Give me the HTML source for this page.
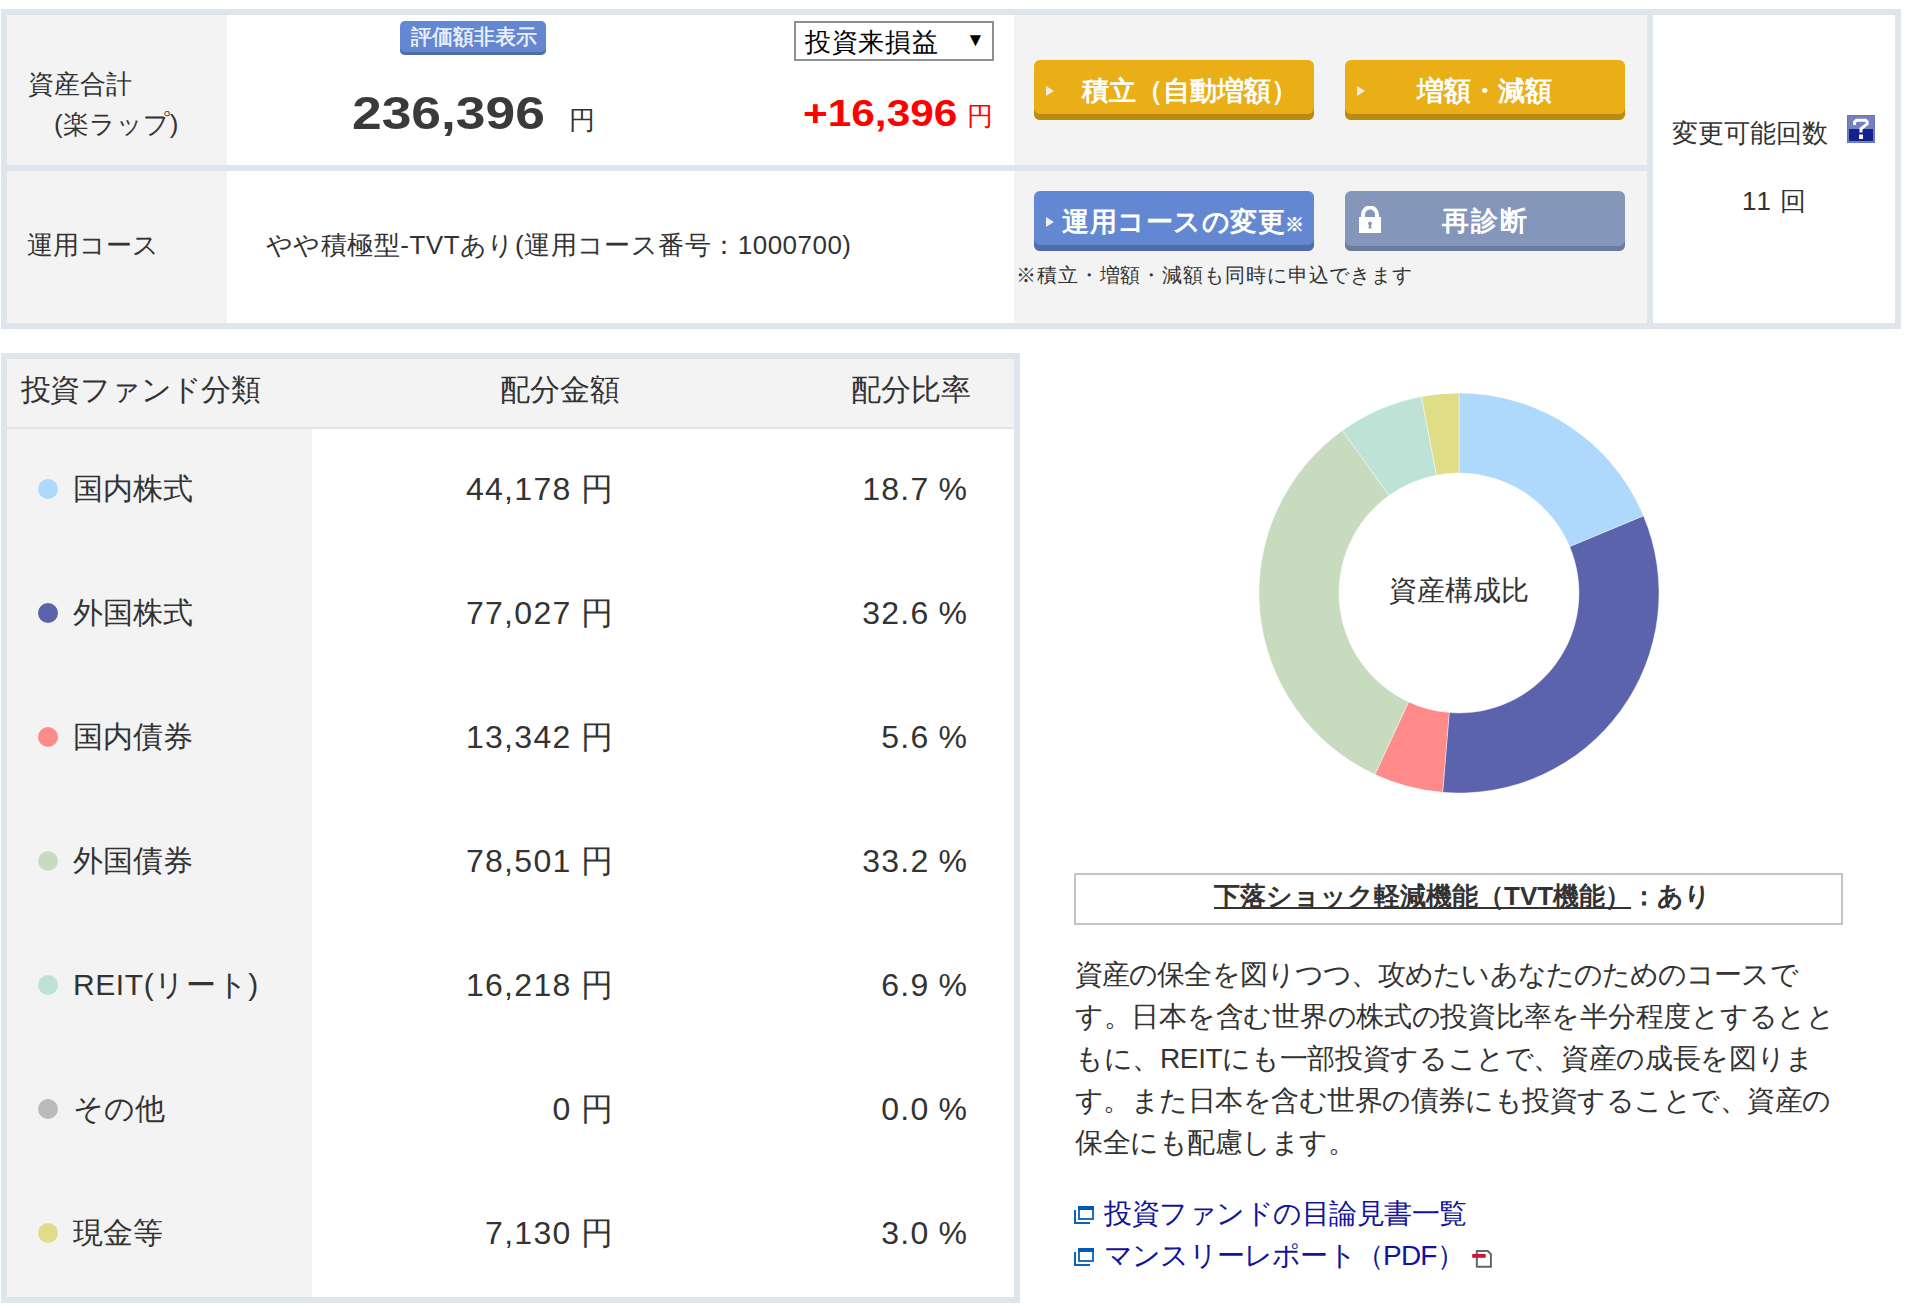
<!DOCTYPE html>
<html lang="ja">
<head>
<meta charset="utf-8">
<style>
html,body{margin:0;padding:0;}
body{width:1914px;height:1308px;overflow:hidden;background:#fff;position:relative;font-family:"Liberation Sans",sans-serif;color:#333;}
.a{position:absolute;white-space:nowrap;}
.bd{background:#dee5ec;}
.g{background:#f3f3f3;}
.w{background:#fff;}
.btn{position:absolute;width:280px;height:60px;border-radius:6px;}
.y{background:#eaae17;box-shadow:inset 0 -6px 0 #bb8a12;}
.bl{background:#6388d1;box-shadow:inset 0 -6px 0 #4f6daa;}
.gr{background:#8496ba;box-shadow:inset 0 -5px 0 #6b7c9c;}
.tri{position:absolute;width:0;height:0;border-top:5px solid transparent;border-bottom:5px solid transparent;border-left:8px solid #f1ede4;}
.bt{position:absolute;color:#fff;font-weight:bold;font-size:27px;line-height:30px;}
.row{position:absolute;left:0;width:1020px;height:124px;}
.dot{position:absolute;left:38px;top:50px;width:20px;height:20px;border-radius:50%;}
.nm{position:absolute;left:73px;top:42px;font-size:30px;line-height:36px;}
.amt{position:absolute;right:407.5px;top:42px;font-size:32px;line-height:36px;text-align:right;}
.amt b,.pct b{font-weight:normal;letter-spacing:1.3px;}
.pct{position:absolute;right:53px;top:42px;font-size:32px;line-height:36px;text-align:right;}
.p{position:absolute;left:1075px;font-size:28px;line-height:30px;}
.lk{position:absolute;left:1104px;font-size:28px;line-height:30px;color:#14149a;}
</style>
</head>
<body>
<!-- TOP PANEL -->
<div class="a bd" style="left:1px;top:9px;width:1900px;height:320px;"></div>
<div class="a g" style="left:7px;top:15px;width:220px;height:150px;"></div>
<div class="a w" style="left:227px;top:15px;width:787px;height:150px;"></div>
<div class="a g" style="left:1014px;top:15px;width:633px;height:150px;"></div>
<div class="a g" style="left:7px;top:171px;width:220px;height:152px;"></div>
<div class="a w" style="left:227px;top:171px;width:787px;height:152px;"></div>
<div class="a g" style="left:1014px;top:171px;width:633px;height:152px;"></div>
<div class="a w" style="left:1653px;top:15px;width:242px;height:308px;"></div>

<div class="a" style="left:28px;top:69px;font-size:26px;line-height:30px;">資産合計</div>
<div class="a" style="left:54px;top:109px;font-size:26px;line-height:30px;">(楽ラップ)</div>

<div class="a" style="left:400px;top:21px;width:146px;height:34px;border-radius:5px;background:#6388d1;box-shadow:inset 0 -3px 0 #4f6daa;"></div>
<div class="a" style="left:410px;top:23px;width:128px;text-align:center;color:#eef2fa;font-weight:normal;-webkit-text-stroke:0.5px #eef2fa;font-size:21px;line-height:28px;">評価額非表示</div>

<div class="a" style="left:352px;top:88px;font-size:46px;line-height:50px;font-weight:bold;color:#3a3a3a;transform:scaleX(1.16);transform-origin:0 0;">236,396</div>
<div class="a" style="left:569px;top:105px;font-size:26px;line-height:30px;">円</div>

<div class="a" style="left:794px;top:21px;width:196px;height:36px;border:2px solid #8f9094;background:#fff;"></div>
<div class="a" style="left:805px;top:27px;font-size:26px;line-height:30px;color:#000;letter-spacing:0.7px;">投資来損益</div>
<div class="a" style="left:966px;top:27px;font-size:19px;line-height:26px;color:#000;">▼</div>

<div class="a" style="left:803px;top:94px;font-size:37px;line-height:40px;font-weight:bold;color:#f00;transform:scaleX(1.145);transform-origin:0 0;">+16,396</div>
<div class="a" style="left:967px;top:101px;font-size:26px;line-height:30px;color:#f00;">円</div>

<div class="btn y" style="left:1034px;top:60px;"></div>
<div class="tri" style="left:1046px;top:86px;"></div>
<div class="bt" style="left:1082px;top:76px;">積立（自動増額）</div>
<div class="btn y" style="left:1345px;top:60px;"></div>
<div class="tri" style="left:1357px;top:86px;"></div>
<div class="bt" style="left:1417px;top:76px;">増額・減額</div>

<div class="a" style="left:27px;top:230px;font-size:26px;line-height:30px;">運用コース</div>
<div class="a" style="left:266px;top:230px;font-size:26px;line-height:30px;letter-spacing:0.47px;">やや積極型-TVTあり(運用コース番号：1000700)</div>

<div class="btn bl" style="left:1034px;top:191px;"></div>
<div class="tri" style="left:1046px;top:217px;"></div>
<div class="bt" style="left:1062px;top:207px;letter-spacing:0.5px;">運用コースの変更<span style="font-size:19px;letter-spacing:0;">※</span></div>
<div class="btn gr" style="left:1345px;top:191px;"></div>
<svg class="a" style="left:1358px;top:206px;" width="24" height="28" viewBox="0 0 24 28">
<path d="M3 11V8.5A9 9 0 0 1 21 8.5V11H17V8.5A5 5 0 0 0 7 8.5V11Z" fill="#fff"/>
<rect x="1" y="11" width="22" height="16" fill="#fff"/>
<path d="M12 15.5a2 2 0 0 1 1 3.7l0.6 3.3h-3.2l0.6-3.3a2 2 0 0 1 1-3.7z" fill="#8496ba"/>
</svg>
<div class="bt" style="left:1442px;top:206px;letter-spacing:2px;">再診断</div>
<div class="a" style="left:1016px;top:263px;font-size:20px;line-height:24px;letter-spacing:0.9px;">※積立・増額・減額も同時に申込できます</div>

<div class="a" style="left:1672px;top:118px;font-size:26px;line-height:30px;">変更可能回数</div>
<svg class="a" style="left:1847px;top:115px;" width="28" height="28" viewBox="0 0 28 28">
<rect x="0" y="0" width="28" height="28" fill="#6b76b8"/>
<rect x="1" y="1" width="26" height="26" fill="#7480c0"/>
<rect x="2" y="14" width="24" height="12" fill="#13208f"/>
<path d="M7.6 10V6.9L9.4 5.3H18.6L20.2 6.9V8.8L14 13.8V17.5" fill="none" stroke="#fff" stroke-width="3" stroke-linejoin="miter"/>
<rect x="12" y="19.5" width="4" height="4.5" fill="#fff"/>
</svg>
<div class="a" style="left:1742px;top:186px;font-size:26px;line-height:30px;"><span style="letter-spacing:2px;">11</span> 回</div>

<!-- BOTTOM TABLE -->
<div class="a bd" style="left:1px;top:353px;width:1019px;height:950px;"></div>
<div class="a g" style="left:7px;top:359px;width:1007px;height:68px;"></div>
<div class="a g" style="left:7px;top:429px;width:305px;height:868px;"></div>
<div class="a w" style="left:312px;top:429px;width:702px;height:868px;"></div>

<div class="a" style="left:21px;top:373px;font-size:30px;line-height:34px;letter-spacing:-0.6px;">投資ファンド分類</div>
<div class="a" style="left:500px;top:373px;font-size:30px;line-height:34px;">配分金額</div>
<div class="a" style="left:851px;top:373px;font-size:30px;line-height:34px;">配分比率</div>

<div class="row" style="top:429px;"><div class="dot" style="background:#aed8fc;"></div><div class="nm">国内株式</div><div class="amt"><b>44,178</b> 円</div><div class="pct"><b>18.7</b> %</div></div>
<div class="row" style="top:553px;"><div class="dot" style="background:#5a63ab;"></div><div class="nm">外国株式</div><div class="amt"><b>77,027</b> 円</div><div class="pct"><b>32.6</b> %</div></div>
<div class="row" style="top:677px;"><div class="dot" style="background:#ff8a8a;"></div><div class="nm">国内債券</div><div class="amt"><b>13,342</b> 円</div><div class="pct"><b>5.6</b> %</div></div>
<div class="row" style="top:801px;"><div class="dot" style="background:#c9dbbe;"></div><div class="nm">外国債券</div><div class="amt"><b>78,501</b> 円</div><div class="pct"><b>33.2</b> %</div></div>
<div class="row" style="top:925px;"><div class="dot" style="background:#bee3d6;"></div><div class="nm" style="letter-spacing:0.6px;">REIT(リート)</div><div class="amt"><b>16,218</b> 円</div><div class="pct"><b>6.9</b> %</div></div>
<div class="row" style="top:1049px;"><div class="dot" style="background:#bbbbbb;"></div><div class="nm">その他</div><div class="amt"><b>0</b> 円</div><div class="pct"><b>0.0</b> %</div></div>
<div class="row" style="top:1173px;"><div class="dot" style="background:#dfdd88;"></div><div class="nm">現金等</div><div class="amt"><b>7,130</b> 円</div><div class="pct"><b>3.0</b> %</div></div>

<!-- DONUT -->
<svg class="a" style="left:1258.7px;top:392.5px;" width="400" height="400" viewBox="0 0 400 400">
<g stroke="#fff" stroke-width="0.4">
<path d="M200.00 0.00A200 200 0 0 1 384.53 122.88L310.72 153.73A120 120 0 0 0 200.00 80.00Z" fill="#aed8fc"/>
<path d="M384.53 122.88A200 200 0 0 1 183.68 399.33L190.21 319.60A120 120 0 0 0 310.72 153.73Z" fill="#5a63ab"/>
<path d="M183.68 399.33A200 200 0 0 1 115.98 381.50L149.59 308.90A120 120 0 0 0 190.21 319.60Z" fill="#ff8a8a"/>
<path d="M115.98 381.50A200 200 0 0 1 83.46 37.46L130.08 102.48A120 120 0 0 0 149.59 308.90Z" fill="#c9dbbe"/>
<path d="M83.46 37.46A200 200 0 0 1 162.52 3.54L177.51 82.13A120 120 0 0 0 130.08 102.48Z" fill="#bee3d6"/>
<path d="M162.52 3.54A200 200 0 0 1 200.00 0.00L200.00 80.00A120 120 0 0 0 177.51 82.13Z" fill="#dfdd88"/>
</g>
</svg>
<div class="a" style="left:1389px;top:575px;font-size:28px;line-height:32px;">資産構成比</div>

<!-- TVT -->
<div class="a" style="left:1074px;top:873px;width:765px;height:48px;border:2px solid #c4c4c4;"></div>
<div class="a" style="left:1214px;top:881px;font-size:26px;line-height:30px;font-weight:bold;"><span style="text-decoration:underline;">下落ショック軽減機能（TVT機能）</span>：あり</div>

<div class="p" style="top:960px;letter-spacing:-0.9px;">資産の保全を図りつつ、攻めたいあなたのためのコースで</div>
<div class="p" style="top:1002px;letter-spacing:-0.27px;">す。日本を含む世界の株式の投資比率を半分程度とするとと</div>
<div class="p" style="top:1044px;letter-spacing:-0.35px;">もに、REITにも一部投資することで、資産の成長を図りま</div>
<div class="p" style="top:1086px;letter-spacing:-0.54px;">す。また日本を含む世界の債券にも投資することで、資産の</div>
<div class="p" style="top:1128px;letter-spacing:-0.5px;">保全にも配慮します。</div>

<svg class="a" style="left:1074px;top:1206px;" width="20" height="18" viewBox="0 0 20 18">
<rect x="4" y="0" width="16" height="14" fill="#1f6fc0"/>
<rect x="4" y="0" width="16" height="4" fill="#005bb5"/>
<rect x="6" y="4" width="12" height="8" fill="#fff"/>
<rect x="0" y="4" width="2" height="14" fill="#0d62b8"/>
<rect x="0" y="16" width="16" height="2" fill="#0d62b8"/>
</svg>
<div class="lk" style="top:1199px;letter-spacing:-0.5px;">投資ファンドの目論見書一覧</div>
<svg class="a" style="left:1074px;top:1248px;" width="20" height="18" viewBox="0 0 20 18">
<rect x="4" y="0" width="16" height="14" fill="#1f6fc0"/>
<rect x="4" y="0" width="16" height="4" fill="#005bb5"/>
<rect x="6" y="4" width="12" height="8" fill="#fff"/>
<rect x="0" y="4" width="2" height="14" fill="#0d62b8"/>
<rect x="0" y="16" width="16" height="2" fill="#0d62b8"/>
</svg>
<div class="lk" style="top:1241px;letter-spacing:-0.8px;">マンスリーレポート（PDF）</div>
<svg class="a" style="left:1472px;top:1250px;" width="20" height="18" viewBox="0 0 20 18">
<path d="M4.85 1.1H15.8L18.9 4.2V16.7H4.85Z" fill="#fff" stroke="#666" stroke-width="2"/>
<rect x="0.2" y="4" width="13.5" height="3.8" fill="#d0142f"/>
</svg>
</body>
</html>
